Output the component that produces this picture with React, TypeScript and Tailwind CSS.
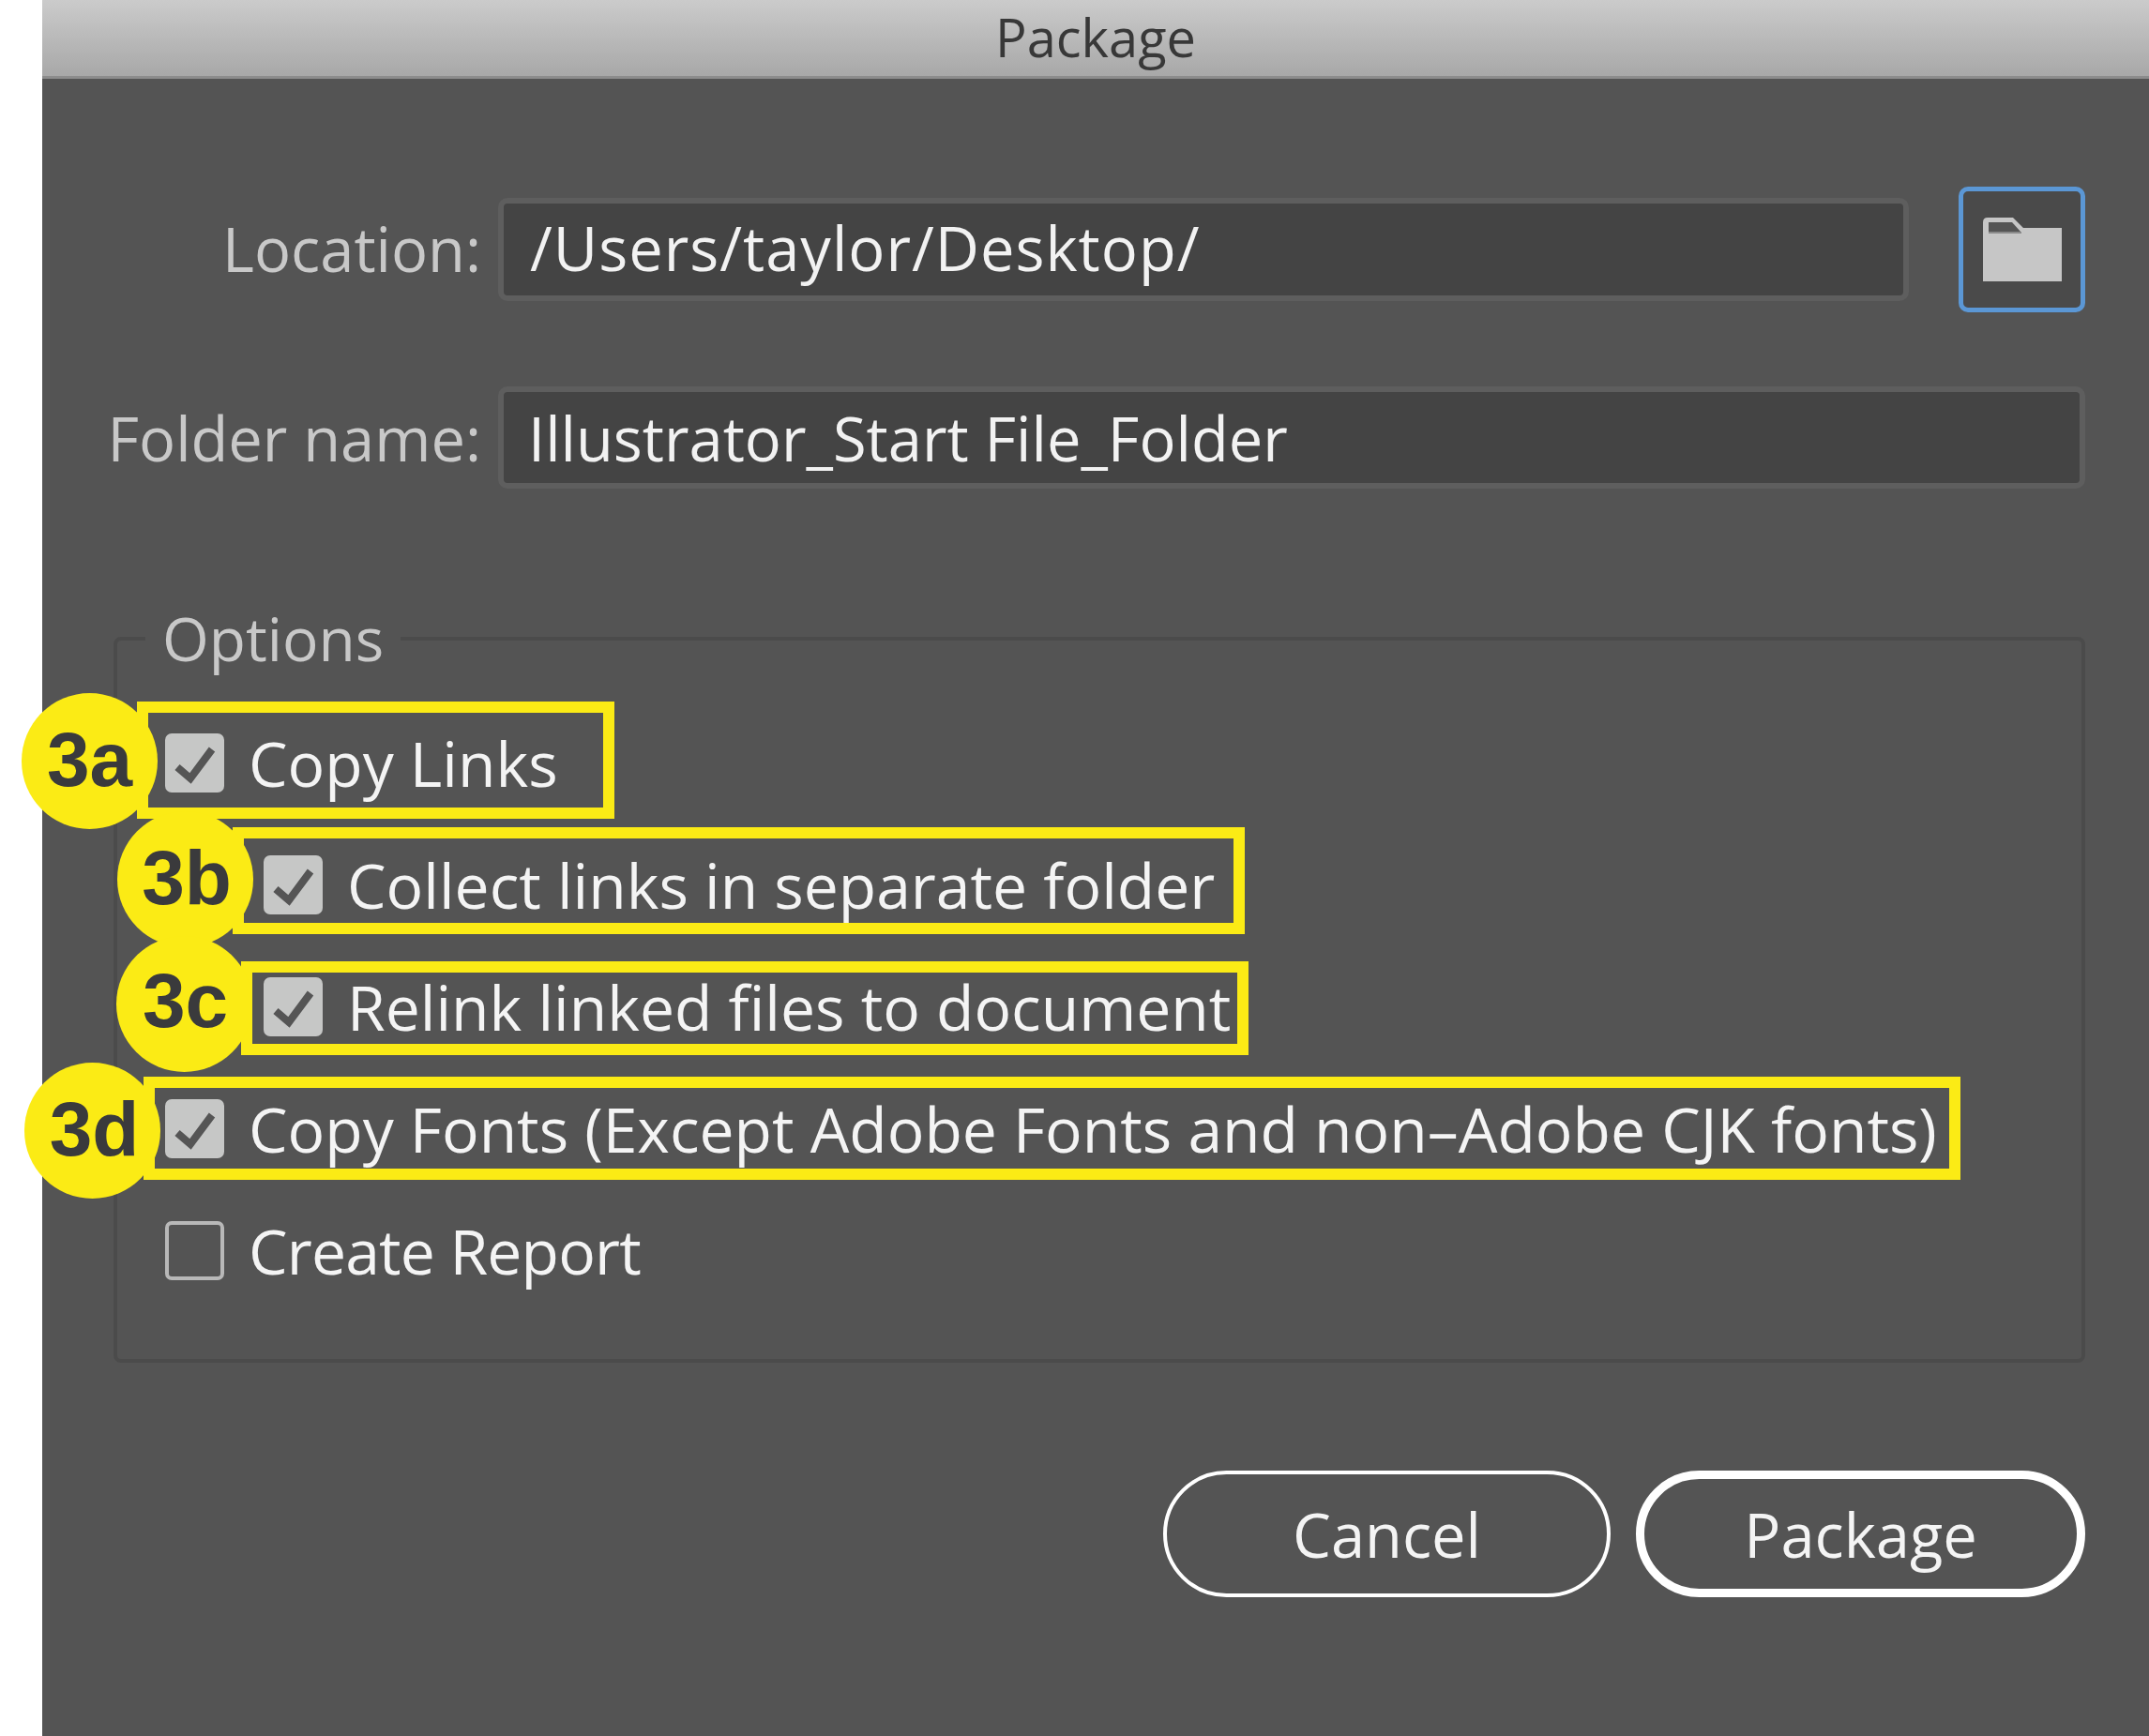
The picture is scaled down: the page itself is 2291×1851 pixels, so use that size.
const sans = "font-['Open_Sans',sans-serif] [font-weight:450]";

const options = [
  { label: "Copy Links", checked: true, indent: false, tracking: "" },
  { label: "Collect links in separate folder", checked: true, indent: true, tracking: "" },
  { label: "Relink linked files to document", checked: true, indent: true, tracking: "" },
  { label: "Copy Fonts (Except Adobe Fonts and non–Adobe CJK fonts)", checked: true, indent: false, tracking: "" },
  { label: "Create Report", checked: false, indent: false, tracking: "tracking-[-0.8px]" },
];

const boxes = [
  "left-[146px] top-[748px] w-[509px] h-[125px]",
  "left-[248px] top-[882px] w-[1079px] h-[114px]",
  "left-[257px] top-[1025px] w-[1074px] h-[100px]",
  "left-[153px] top-[1148px] w-[1937px] h-[110px]",
];

const badges = [
  { text: "3a", pos: "left-[23px] top-[739px] pb-[5px]" },
  { text: "3b", pos: "left-[125px] top-[865px] pb-[5px] pl-[3px]" },
  { text: "3c", pos: "left-[124px] top-[998px] pb-[8px] pl-[2px]" },
  { text: "3d", pos: "left-[26px] top-[1133px] pb-[5px] pl-[4px]" },
];

function Checkbox({ checked }: { checked: boolean }) {
  if (!checked) {
    return <div className="w-[63px] h-[63px] shrink-0 rounded-[7px] border-[4px] border-[#b8b8b8]" />;
  }
  return (
    <div className="w-[63px] h-[63px] shrink-0 rounded-[7px] bg-[#c6c7c6]">
      <svg viewBox="0 0 63 63" className="w-full h-full">
        <path d="M13 36 L27 48 L50 17" fill="none" stroke="#555" strokeWidth="8" />
      </svg>
    </div>
  );
}

function FolderIcon() {
  return (
    <svg viewBox="0 0 84 68" className="w-[84px] h-[68px]">
      <path d="M0 5 Q0 0 5 0 H32 L43 11 H84 V68 H0 Z" fill="#c6c6c6" />
      <path d="M6 5 H31 L41 16 H6 Z" fill="#555" />
      <path d="M6 16 H41" stroke="#8a8a8a" strokeWidth="2" />
    </svg>
  );
}

export default function App() {
  return (
    <div className={`relative w-[2291px] h-[1851px] overflow-hidden bg-white pl-[45px] ${sans}`}>
      <div className="h-full bg-[#545454] flex flex-col">
        {/* Title bar */}
        <div className="h-[84px] shrink-0 flex items-center justify-center pb-[3px] bg-gradient-to-b from-[#cbcbcb] to-[#a8a8a8] border-b-[3px] border-[#8c8c8c]">
          <span className="text-[56px] text-[#383838]">Package</span>
        </div>

        <div className="pl-[76px] pr-[68px] pt-[115px] flex flex-col">
          {/* Location */}
          <div className="flex items-center h-[134px] -ml-[76px]">
            <div className="w-[468px] text-right text-[65px] text-[#c8c8c8]">Location:</div>
            <div className="ml-[18px] w-[1504px] h-[110px] rounded-[10px] border-[6px] border-[#5e5e5e] bg-[#444444] pl-[28px] flex items-center text-[65px] tracking-[1px] text-[#f2f2f2] pb-[2px]">
              /Users/taylor/Desktop/
            </div>
            <button className="ml-[53px] w-[135px] h-[134px] rounded-[10px] border-[5px] border-[#5b97d5] bg-[#4a4a4a] flex items-center justify-center">
              <FolderIcon />
            </button>
          </div>

          {/* Folder name */}
          <div className="flex items-center h-[109px] mt-[79px] -ml-[76px]">
            <div className="w-[468px] text-right text-[65px] text-[#c8c8c8] pt-[3px]">Folder name:</div>
            <div className="ml-[18px] w-[1692px] h-[109px] rounded-[10px] border-[6px] border-[#5e5e5e] bg-[#444444] pl-[26px] pt-[2px] flex items-center text-[65px] text-[#f2f2f2]">
              Illustrator_Start File_Folder
            </div>
          </div>

          {/* Options */}
          <fieldset className="mt-[118px] h-[814px] min-w-0 rounded-[8px] border-[4px] border-[#4b4b4b] pl-[51px]">
            <legend className="-ml-[21px] px-[18px] text-[64px] leading-[84px] text-[#c8c8c8]">Options</legend>
            <div className="flex flex-col mt-[25px]">
              {options.map((o) => (
                <div key={o.label} className={`flex items-center gap-[26px] h-[130px] ${o.indent ? "ml-[105px]" : ""}`}>
                  <Checkbox checked={o.checked} />
                  <span className={`text-[66px] text-[#f4f4f4] whitespace-nowrap ${o.tracking}`}>{o.label}</span>
                </div>
              ))}
            </div>
          </fieldset>

          {/* Buttons */}
          <div className="mt-[115px] flex justify-end gap-[27px]">
            <button className="w-[477px] h-[135px] pt-[2px] rounded-full border-[4px] border-white text-[65px] text-[#f4f4f4]">Cancel</button>
            <button className="w-[479px] h-[135px] pt-[2px] rounded-full border-[9px] border-white text-[65px] text-[#f4f4f4]">Package</button>
          </div>
        </div>
      </div>

      {/* Yellow annotations */}
      {boxes.map((b) => (
        <div key={b} className={`absolute border-[12px] border-[#fbeb15] ${b}`} />
      ))}
      {badges.map((b) => (
        <div
          key={b.text}
          className={`absolute w-[145px] h-[145px] rounded-full bg-[#fbeb15] flex items-center justify-center font-['Liberation_Sans',sans-serif] font-bold text-[82px] text-[#3a3a3c] ${b.pos}`}
        >
          {b.text}
        </div>
      ))}
    </div>
  );
}
